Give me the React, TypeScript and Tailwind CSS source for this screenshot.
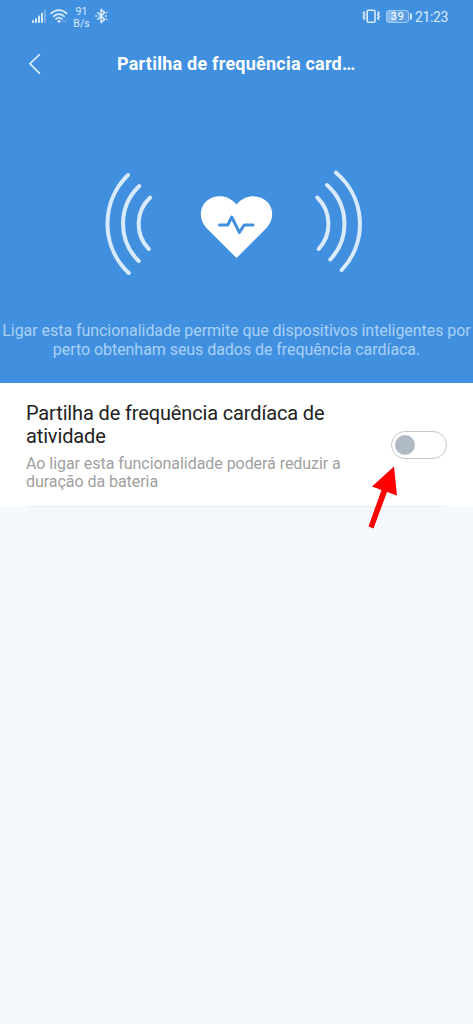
function StatusBar() {
  return (
    <div className="flex h-[35px] shrink-0 items-start pl-8 text-[#d9eafa]">
      <svg width="16" height="16" viewBox="0 0 16 16" className="mt-[8px]" fill="currentColor">
        <rect x="0" y="12" width="2" height="3" rx="1" />
        <rect x="3" y="10" width="2" height="5" rx="1" />
        <rect x="6" y="7.5" width="2" height="7.5" rx="1" />
        <rect x="9" y="4.5" width="2" height="10.5" rx="1" />
        <rect x="12" y="1.5" width="2" height="13.5" rx="1" opacity="0.35" />
      </svg>
      <svg width="18" height="16" viewBox="0 0 18 16" className="ml-[2px] mt-[8px]" fill="none" stroke="currentColor" strokeWidth="1.7" strokeLinecap="round">
        <path d="M1.2 5.4C5.6.9 12.2.9 16.6 5.4M3.7 8.3c3-3 7.4-3 10.4 0M6.1 10.9c1.7-1.6 4-1.6 5.7 0" />
        <circle cx="9" cy="13.3" r="1.5" fill="currentColor" stroke="none" />
        <path d="M12.8 12v2M15.2 12v2" opacity="0.3" strokeWidth="1.2" />
      </svg>
      <div className="ml-[4px] mt-[6px] w-[19px] whitespace-nowrap text-center text-[10.5px] leading-[12px]">
        <div>91</div>
        <div>B/s</div>
      </div>
      <svg width="13" height="16" viewBox="0 0 13 16" className="ml-[4px] mt-[8px]" fill="none" stroke="currentColor" strokeWidth="1.5" strokeLinejoin="round">
        <path d="M2.3 4.2 9.6 11.4 6.1 14.6V1.3l3.5 3.3-7.3 7.1" />
        <path d="M.3 8h2M9.8 8h2M10.8 4.5h1.4M10.8 11.5h1.4" />
      </svg>
      <svg width="19" height="16" viewBox="0 0 19 16" className="ml-auto mt-[8px]" fill="none" stroke="currentColor" strokeWidth="1.6">
        <rect x="5.2" y="2.2" width="7.8" height="12" rx="1.2" />
        <path d="M2.8 3.5 1.4 5.2l1.4 1.6-1.4 1.7 1.4 1.6-1.4 1.7M15.7 3.5l1.4 1.7-1.4 1.6 1.4 1.7-1.4 1.6 1.4 1.7" strokeWidth="1.6" />
      </svg>
      <div className="ml-[5px] mt-[10px] flex items-center">
        <div className="flex h-[13px] w-[23px] items-center justify-center rounded-[3px] border border-[#9fcaf3] bg-linear-to-r from-[#86baee] from-40% to-[#5b9fe5] to-45% text-[11px] font-medium leading-none tracking-[0.5px] text-[#edf6ff]">39</div>
        <div className="ml-px h-[7px] w-[2px] rounded-r-sm bg-[#d9eafa]" />
      </div>
      <div className="ml-[3px] mr-[25px] mt-[9px] w-[33px] whitespace-nowrap text-[14px] leading-4 tracking-[-0.4px]">21:23</div>
    </div>
  );
}

function HeartBroadcast() {
  return (
    <svg width="473" height="130" viewBox="0 160 473 130" className="block" fill="none">
      <g stroke="#d8eafb" strokeWidth="4" strokeLinecap="round">
        <path d="M128 175A68 68 0 0 0 128.7 273" />
        <path d="M139.3 186A52 52 0 0 0 138.7 261" />
        <path d="M150.2 197.5A36 36 0 0 0 148.8 249" />
        <path d="M317.3 197.5A37 37 0 0 1 318.7 249" />
        <path d="M327 185A52 52 0 0 1 330.3 259.5" />
        <path d="M336 172.7A67 67 0 0 1 341.7 270" />
      </g>
      <path d="M236.5 258 206.5 228C199 220 199 208 206 201.500C214.500 194 228 194.500 236.500 204.500C245 194.500 259 194 267 201.500C274 208 274 220 266.500 228Z" fill="#fff" />
      <path d="M219.500 225H227.800L231.700 217 239.400 232.500 244.200 225H253" stroke="#4190e0" strokeWidth="3" strokeLinecap="round" strokeLinejoin="round" />
    </svg>
  );
}

export default function App() {
  return (
    <div className="relative flex h-[1024px] w-[473px] flex-col overflow-hidden bg-[#f5f9fc] font-[Roboto,sans-serif]">
      <header className="flex h-[383px] shrink-0 flex-col bg-[#4190e0]">
        <StatusBar />
        <div className="flex h-[57px] shrink-0 items-center">
          <svg width="14" height="22" viewBox="0 0 14 22" className="ml-7" fill="none" stroke="#e5f1fc" strokeWidth="1.6">
            <path d="M11.800 1.200 2 10.800 11.800 20.600" />
          </svg>
          <h1 className="ml-[75px] whitespace-nowrap text-[18px] font-bold leading-6 tracking-[0.23px] text-white">Partilha de frequência card…</h1>
        </div>
        <div className="pt-[68px]">
          <HeartBroadcast />
        </div>
        <p className="mt-[31px] whitespace-nowrap text-center text-[16px] leading-[19px] tracking-[-0.05px] text-[#a9d0f5]">
          Ligar esta funcionalidade permite que dispositivos inteligentes por
          <br />
          perto obtenham seus dados de frequência cardíaca.
        </p>
      </header>
      <main className="h-[124px] shrink-0 bg-white pl-[26px] pr-[26px]">
        <div className="flex h-full items-center justify-between border-b border-[#e9eaeb]">
          <div className="whitespace-nowrap pt-[3px]">
            <h2 className="text-[20px] leading-[23px] tracking-[-0.14px] text-[#222]">
              Partilha de frequência cardíaca de
              <br />
              atividade
            </h2>
            <p className="mt-[7px] text-[16px] leading-[18px] tracking-[-0.05px] text-[#a0a0a0]">
              Ao ligar esta funcionalidade poderá reduzir a
              <br />
              duração da bateria
            </p>
          </div>
          <button role="switch" aria-checked="false" className="flex h-[28px] w-[56px] shrink-0 items-center rounded-full border border-[#c6c8ca] bg-white pl-[3px]">
            <span className="size-5 rounded-full bg-[#afbac4]" />
          </button>
        </div>
      </main>
      <svg width="32" height="66" viewBox="368 464 32 66" className="absolute left-[368px] top-[464px]" fill="#fe0000">
        <path d="M394 466.500 397 495.500 387 492 373.500 528.500 368.500 526.500 381.500 490 372 486.500Z" />
      </svg>
    </div>
  );
}
